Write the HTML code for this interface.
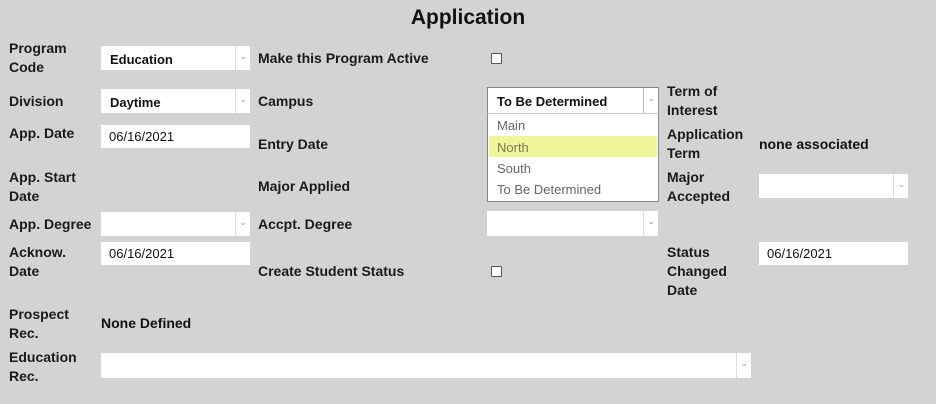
<!DOCTYPE html>
<html><head><meta charset="utf-8"><style>
body{margin:0;width:936px;height:404px;background:#d3d3d3;font-family:"Liberation Sans",sans-serif;position:relative;overflow:hidden;color:#111}
.a{position:absolute}
.l{position:absolute;font-weight:bold;font-size:14px;line-height:19px;color:#1a1a1a;margin-top:1px}
.box{position:absolute;background:#fff}
.sel .t{position:absolute;left:9px;top:6px;font-size:13px;font-weight:bold}
.sel .d{position:absolute;right:14px;top:0;bottom:0;border-left:1px solid #ddd}
.sel .ar{position:absolute;right:3px;top:5px;font-size:9px;color:#999}
.inp .t{position:absolute;left:8px;top:4px;font-size:13px}
.cb{position:absolute;width:9px;height:9px;border:1px solid #555;background:#fff;border-radius:1px}
.opt{position:absolute;left:9px;font-size:13px;color:#666}
</style></head><body>
<div class="a" style="left:0;width:936px;top:6px;text-align:center;font-size:21px;font-weight:bold">Application</div>

<div class="l" style="left:9px;top:38px">Program<br>Code</div>
<div class="l" style="left:9px;top:91px">Division</div>
<div class="l" style="left:9px;top:123px">App. Date</div>
<div class="l" style="left:9px;top:167px">App. Start<br>Date</div>
<div class="l" style="left:9px;top:214px">App. Degree</div>
<div class="l" style="left:9px;top:242px">Acknow.<br>Date</div>
<div class="l" style="left:9px;top:304px">Prospect<br>Rec.</div>
<div class="l" style="left:9px;top:347px">Education<br>Rec.</div>

<div class="box sel" style="left:101px;top:46px;width:149px;height:24px"><span class="t">Education</span><span class="d"></span><span class="ar">⌄</span></div>
<div class="box sel" style="left:101px;top:89px;width:149px;height:24px"><span class="t">Daytime</span><span class="d"></span><span class="ar">⌄</span></div>
<div class="box inp" style="left:101px;top:125px;width:149px;height:23px"><span class="t">06/16/2021</span></div>
<div class="box sel" style="left:101px;top:212px;width:149px;height:24px"><span class="d"></span><span class="ar">⌄</span></div>
<div class="box inp" style="left:101px;top:242px;width:149px;height:23px"><span class="t">06/16/2021</span></div>
<div class="a" style="left:101px;top:315px;font-size:14px;font-weight:bold">None Defined</div>
<div class="box sel" style="left:101px;top:353px;width:650px;height:25px"><span class="d"></span><span class="ar">⌄</span></div>

<div class="l" style="left:258px;top:48px">Make this Program Active</div>
<div class="cb" style="left:491px;top:53px"></div>
<div class="l" style="left:258px;top:91px">Campus</div>
<div class="l" style="left:258px;top:134px">Entry Date</div>
<div class="l" style="left:258px;top:176px">Major Applied</div>
<div class="l" style="left:258px;top:214px">Accpt. Degree</div>
<div class="l" style="left:258px;top:261px">Create Student Status</div>
<div class="cb" style="left:491px;top:266px"></div>

<div class="box sel" style="left:487px;top:87px;width:170px;height:25px;border:1px solid #888;border-bottom:none"><span class="t" style="left:9px;top:6px">To Be Determined</span><span class="d" style="border-color:#bbb"></span><span class="ar">⌄</span></div>
<div class="box" style="left:487px;top:113px;width:170px;height:87px;border:1px solid #888;border-top:1px solid #ccc">
<div class="a" style="left:1px;right:1px;top:22px;height:21px;background:#eef59a"></div>
<div class="opt" style="top:4px">Main</div>
<div class="opt" style="top:26px;color:#7a7a55">North</div>
<div class="opt" style="top:47px">South</div>
<div class="opt" style="top:68px">To Be Determined</div>
</div>
<div class="box sel" style="left:487px;top:211px;width:171px;height:25px"><span class="d"></span><span class="ar">⌄</span></div>

<div class="l" style="left:667px;top:81px">Term of<br>Interest</div>
<div class="l" style="left:667px;top:124px">Application<br>Term</div>
<div class="l" style="left:667px;top:167px">Major<br>Accepted</div>
<div class="l" style="left:667px;top:242px">Status<br>Changed<br>Date</div>

<div class="a" style="left:759px;top:136px;font-size:14px;font-weight:bold">none associated</div>
<div class="box sel" style="left:759px;top:174px;width:149px;height:24px"><span class="d"></span><span class="ar">⌄</span></div>
<div class="box inp" style="left:759px;top:242px;width:149px;height:23px"><span class="t">06/16/2021</span></div>
</body></html>
